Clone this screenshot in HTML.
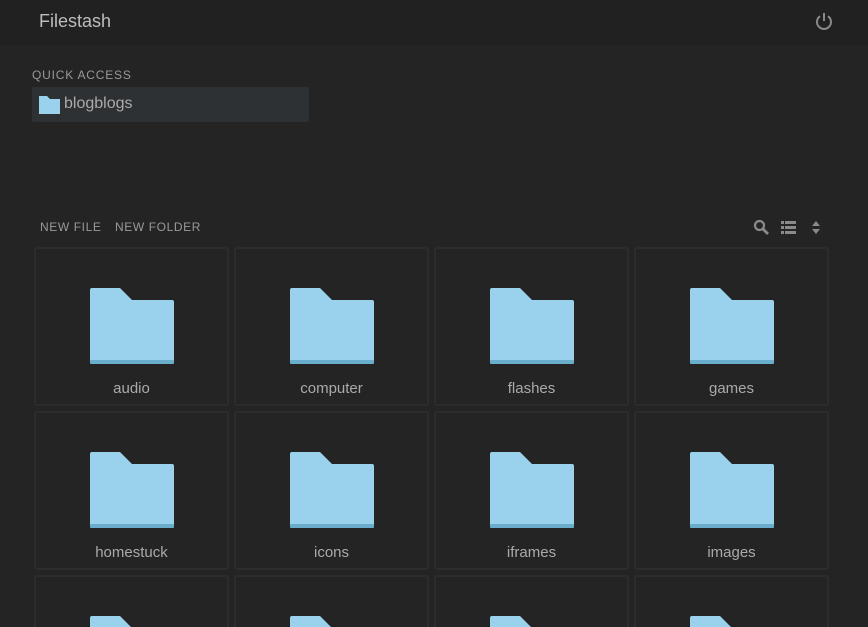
<!DOCTYPE html>
<html style="width:868px;height:627px;overflow:hidden"><head><style>
*{margin:0;padding:0;box-sizing:border-box}
body{width:868px;height:627px;overflow:hidden;background:#242424;font-family:"Liberation Sans",sans-serif;position:relative}
.hdr{position:absolute;left:0;top:0;width:868px;height:45px;background:#212121}
.hdr .t{position:absolute;left:39px;top:11px;font-size:18px;color:#bdbdbd}
.qa{position:absolute;left:32px;top:68px;font-size:12px;letter-spacing:0.8px;color:#999}
.qb{position:absolute;left:32px;top:87px;width:277px;height:35px;background:#2e3134;border-radius:2px}
.qb span{position:absolute;left:32px;top:8px;font-size:16px;color:#aaa}
.act{position:absolute;top:220px;font-size:12px;letter-spacing:0.6px;color:#999}
.card{position:absolute;width:195px;height:159px;border:2px solid #2c2c2c;border-radius:3px}
.card svg{position:absolute;left:54px;top:39px}
.card .l{position:absolute;left:0;right:0;top:131px;text-align:center;font-size:15px;color:#aaa}
</style></head><body>
<div class="hdr"><div class="t">Filestash</div>
<svg style="position:absolute;left:814px;top:11px" width="20" height="20" viewBox="0 0 20 20"><path d="M6 5.2A7 7 0 1 0 14 5.2" fill="none" stroke="#8a8a8a" stroke-width="2"/><line x1="10" y1="2" x2="10" y2="10" stroke="#8a8a8a" stroke-width="2"/></svg></div>
<div class="qa">QUICK ACCESS</div>
<div class="qb"><svg style="position:absolute;left:6px;top:8px" width="23" height="20" viewBox="0 0 23 20"><path d="M1 1h8l3 3h10v15H1z" fill="#9ad2ee"/></svg><span>blogblogs</span></div>
<div class="act" style="left:40px">NEW FILE</div>
<div class="act" style="left:115px">NEW FOLDER</div>
<svg style="position:absolute;left:753px;top:219px" width="17" height="17" viewBox="0 0 17 17"><circle cx="6.5" cy="6.5" r="4.5" fill="none" stroke="#8a8a8a" stroke-width="2.2"/><line x1="10" y1="10" x2="15" y2="15" stroke="#8a8a8a" stroke-width="2.8"/></svg>
<svg style="position:absolute;left:781px;top:220px" width="15" height="15" viewBox="0 0 15 15" fill="#8a8a8a"><rect x="0" y="1" width="3" height="3"/><rect x="4" y="1" width="11" height="3"/><rect x="0" y="6" width="3" height="3"/><rect x="4" y="6" width="11" height="3"/><rect x="0" y="11" width="3" height="3"/><rect x="4" y="11" width="11" height="3"/></svg>
<svg style="position:absolute;left:811px;top:220px" width="10" height="15" viewBox="0 0 10 15" fill="#8a8a8a"><path d="M1 6L5 1L9 6z"/><path d="M1 9L5 14L9 9z"/></svg>
<div id="g"></div>
<script>
var n=["audio","computer","flashes","games","homestuck","icons","iframes","images","","","",""];
var h="";
for(var i=0;i<12;i++){var x=34+(i%4)*200,y=247+Math.floor(i/4)*164;
h+='<div class="card" style="left:'+x+'px;top:'+y+'px"><svg width="84" height="76" viewBox="0 0 84 76"><path d="M2 0h28l12 12h40a2 2 0 0 1 2 2v60a2 2 0 0 1-2 2H2a2 2 0 0 1-2-2V2a2 2 0 0 1 2-2z" fill="#9ad2ee"/><rect x="0" y="72" width="84" height="4" rx="1" fill="#6aaccc"/></svg><div class="l">'+n[i]+'</div></div>';}
document.getElementById("g").innerHTML=h;
</script>
</body></html>
